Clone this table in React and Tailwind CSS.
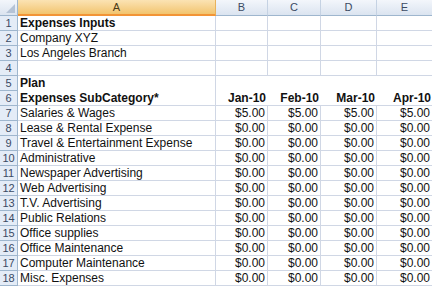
import React from "react";

const months = ["Jan-10", "Feb-10", "Mar-10", "Apr-10"];

const expenses = [
  ["Salaries & Wages", "$5.00"],
  ["Lease & Rental Expense", "$0.00"],
  ["Travel & Entertainment Expense", "$0.00"],
  ["Administrative", "$0.00"],
  ["Newspaper Advertising", "$0.00"],
  ["Web Advertising", "$0.00"],
  ["T.V. Advertising", "$0.00"],
  ["Public Relations", "$0.00"],
  ["Office supplies", "$0.00"],
  ["Office Maintenance", "$0.00"],
  ["Computer Maintenance", "$0.00"],
  ["Misc. Expenses", "$0.00"],
];

const cols = "grid grid-cols-[18px_198px_52px_53px_56px_56px]";

function RowNum({ n }) {
  return (
    <div className="h-[15px] bg-[#e4ecf7] border-r border-b border-[#9eb6ce] text-[#3b4a63] text-[11px] leading-[15px] text-center">
      {n}
    </div>
  );
}

function Row({ n, a, vals, bold, plain, hideBottom }) {
  return (
    <div className={cols}>
      <RowNum n={n} />
      <div
        className={
          "h-[15px] border-r border-[#d0d7e5] text-[12px] leading-[15px] text-[#111] whitespace-nowrap px-[2px] " +
          (hideBottom ? "" : "border-b ") +
          (bold ? "font-bold" : "")
        }
      >
        {a}
      </div>
      {[0, 1, 2, 3].map((i) => (
        <div
          key={i}
          className={
            "h-[15px] border-[#d0d7e5] text-[12px] leading-[15px] text-[#111] text-right px-[2px] whitespace-nowrap " +
            (plain ? "" : "border-r ") +
            (hideBottom ? "" : "border-b ") +
            (bold ? "font-bold" : "")
          }
        >
          {vals ? vals[i] : ""}
        </div>
      ))}
    </div>
  );
}

export default function App() {
  return (
    <div
      className="w-[432px] h-[287px] overflow-hidden bg-white text-black"
      style={{ fontFamily: '"Liberation Sans", Arial, sans-serif' }}
    >
      <div className={cols + " h-[16px]"}>
        <div className="relative bg-gradient-to-b from-[#f3f6fb] to-[#dbe4f0] border-r border-b border-[#9eb6ce]">
          <div className="absolute right-[2px] bottom-[2px] w-0 h-0 border-l-[9px] border-l-transparent border-b-[9px] border-b-[#b5c3d6]" />
        </div>
        <div className="bg-gradient-to-b from-[#fbe3b3] to-[#f2c46d] border-r border-b-2 border-[#f29436] border-r-[#e8b25c] text-[11px] leading-[14px] text-center text-[#4b3a17]">
          A
        </div>
        {["B", "C", "D", "E"].map((c) => (
          <div
            key={c}
            className="bg-gradient-to-b from-[#f3f6fb] to-[#dbe4f0] border-r border-b border-[#9eb6ce] border-r-[#c5d2e3] text-[11px] leading-[15px] text-center text-[#3b4a63]"
          >
            {c}
          </div>
        ))}
      </div>
      <Row n={1} a="Expenses Inputs" bold />
      <Row n={2} a="Company XYZ" />
      <Row n={3} a="Los Angeles Branch" />
      <Row n={4} a="" />
      <Row n={5} a="Plan" bold plain hideBottom />
      <Row n={6} a="Expenses SubCategory*" bold plain vals={months} />
      {expenses.map(([name, v], i) => (
        <Row key={name} n={i + 7} a={name} vals={[v, v, v, v]} />
      ))}
    </div>
  );
}
